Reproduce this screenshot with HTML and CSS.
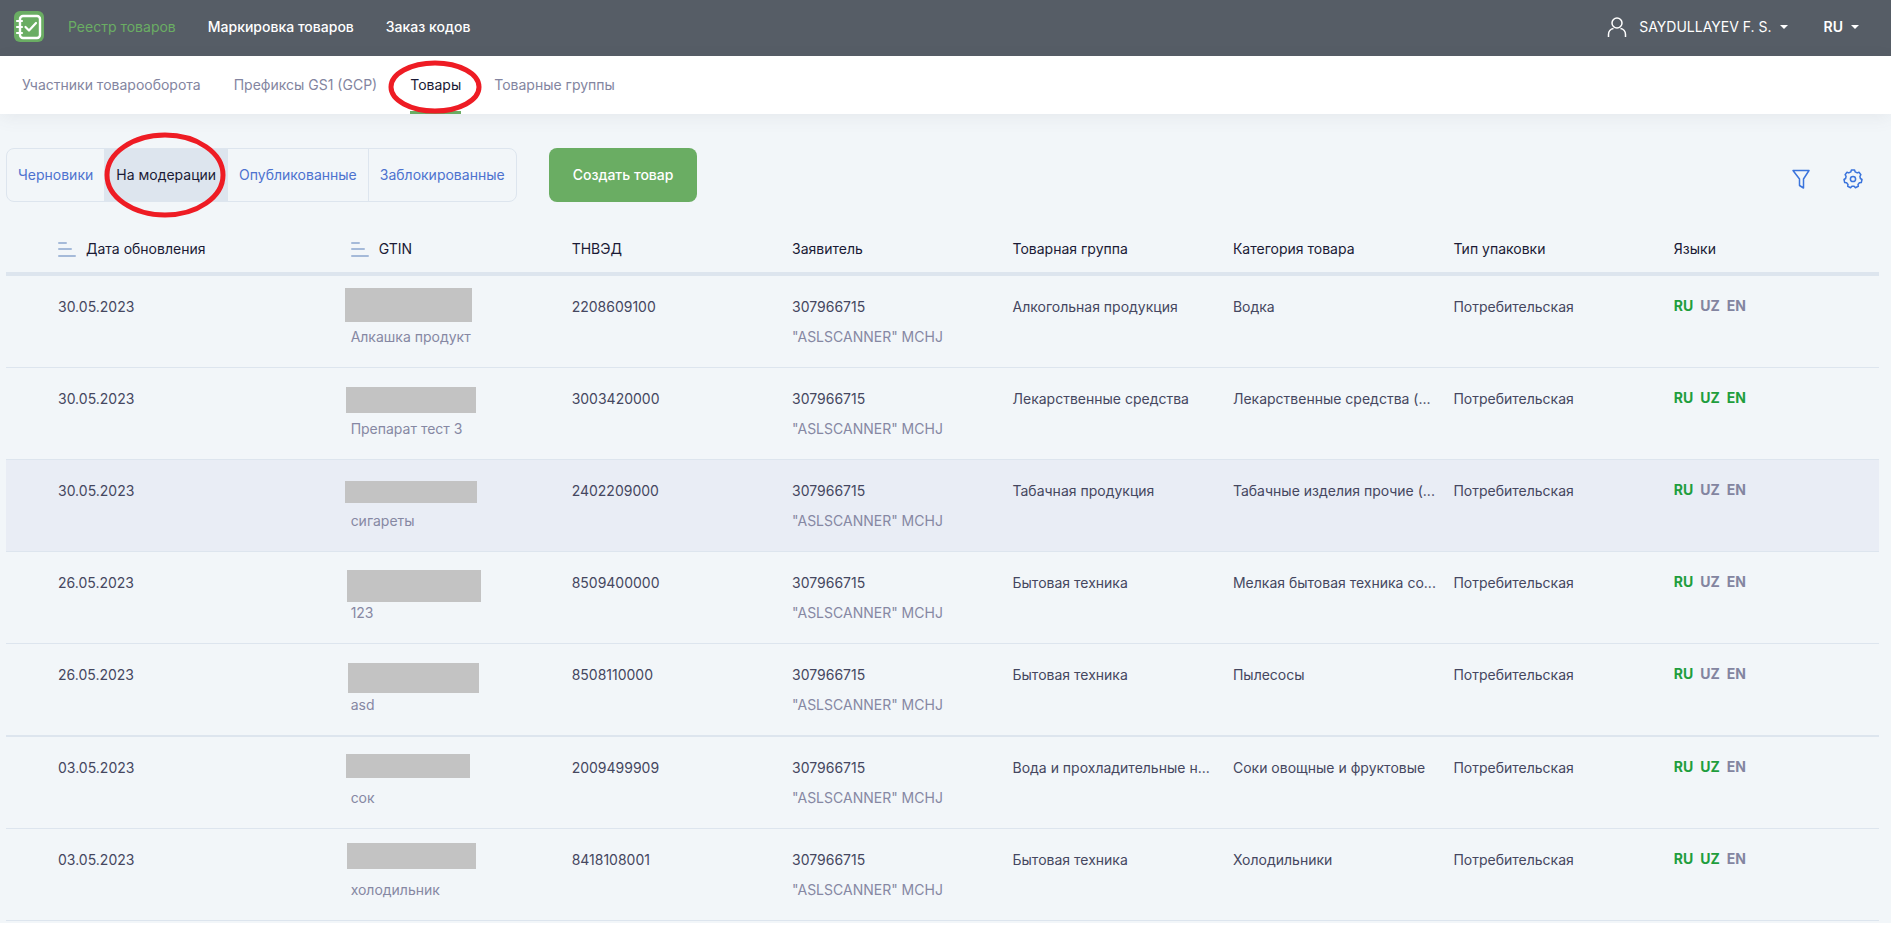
FILE: index.html
```
<!DOCTYPE html>
<html lang="ru">
<head>
    <meta charset="UTF-8">
    <meta name="viewport" content="width=device-width, initial-scale=1.0">
    <title>Реестр товаров</title>
    <link rel="stylesheet" href="styles.css">
</head>
<body>
    <div class="page">
        <header class="header">
            <a href="#" class="logo" aria-label="Главная">
                <svg width="30" height="32" viewBox="0 0 30 32">
                    <rect width="30" height="31" rx="6" fill="#6aad63"/>
                    <rect x="6" y="5" width="20" height="22" rx="3" fill="none" stroke="#fff" stroke-width="2.4"/>
                    <path d="M3 10h5M3 16h5M3 22h5" stroke="#fff" stroke-width="2.2" stroke-linecap="round"/>
                    <path d="M11.500 16l3.500 3.500 7-7.500" fill="none" stroke="#fff" stroke-width="2.2" stroke-linecap="round" stroke-linejoin="round"/>
                </svg>
            </a>
            <nav class="menu">
                <a href="#" class="menu-link current">Реестр товаров</a>
                <a href="#" class="menu-link">Маркировка товаров</a>
                <a href="#" class="menu-link">Заказ кодов</a>
            </nav>
            <div class="account">
                <button type="button" class="user-btn">
                    <svg width="20" height="20" viewBox="0 0 20 20" fill="none" stroke="#fff" stroke-width="1.500">
                        <circle cx="10" cy="6" r="5"/>
                        <path d="M1.500 20v-2.500a6 6 0 0 1 5-6M18.500 20v-2.500a6 6 0 0 0-5-6"/>
                    </svg>
                    <span>SAYDULLAYEV F. S.</span>
                    <span class="caret"></span>
                </button>
                <button type="button" class="lang-btn">RU <span class="caret"></span></button>
            </div>
        </header>

        <nav class="submenu">
            <a href="#" class="submenu-link">Участники товарооборота</a>
            <a href="#" class="submenu-link">Префиксы GS1 (GCP)</a>
            <a href="#" class="submenu-link active">Товары
                <svg class="mark mark-menu" viewBox="0 0 94 54"><ellipse cx="47" cy="27" rx="44" ry="24"/></svg>
            </a>
            <a href="#" class="submenu-link">Товарные группы</a>
        </nav>

        <main class="content">
            <div class="toolbar">
                <div class="tabs">
                    <button type="button" class="tab">Черновики</button>
                    <button type="button" class="tab active">На модерации
                        <svg class="mark mark-tab" viewBox="0 0 122 86"><ellipse cx="61" cy="43" rx="58" ry="40"/></svg>
                    </button>
                    <button type="button" class="tab">Опубликованные</button>
                    <button type="button" class="tab">Заблокированные</button>
                </div>
                <button type="button" class="create-btn">Создать товар</button>
                <div class="tools">
                    <button type="button" class="icon-btn" aria-label="Фильтр">
                        <svg width="20" height="20" viewBox="0 0 20 20" fill="none" stroke="#3b74dc" stroke-width="1.500" stroke-linejoin="round">
                            <path d="M2 1.500h16l-5.500 8.500v9l-4-2.500v-6.500z"/>
                        </svg>
                    </button>
                    <button type="button" class="icon-btn" aria-label="Настройки">
                        <svg width="20" height="20" viewBox="0 0 20 20" fill="none" stroke="#3b74dc" stroke-width="1.500" stroke-linejoin="round">
                            <path d="M7.800 2.900L8.400 1.100H11.600L12.200 2.900L14.200 3.900L16 3.200L17.900 5.700L16.900 7.300L17.400 9.500L19 10.500L18.300 13.500L16.400 13.700L15 15.400L15.300 17.300L12.400 18.700L11.100 17.300H8.900L7.600 18.700L4.700 17.300L5 15.400L3.600 13.700L1.700 13.500L1 10.500L2.600 9.500L3.100 7.300L2.100 5.700L4 3.200L5.800 3.900Z"/>
                            <circle cx="10" cy="10" r="2.600"/>
                        </svg>
                    </button>
                </div>
            </div>

            <table class="table">
                <colgroup>
                    <col class="col-date">
                    <col class="col-gtin">
                    <col class="col-data" span="5">
                    <col>
                </colgroup>
                <thead>
                    <tr>
                        <th>
                            <svg class="sort" width="18" height="16" viewBox="0 0 18 16"><path d="M1 1h7M1 7h12M1 14h16"/></svg>Дата обновления
                        </th>
                        <th>
                            <svg class="sort" width="18" height="16" viewBox="0 0 18 16"><path d="M1 1h7M1 7h12M1 14h16"/></svg>GTIN
                        </th>
                        <th>ТНВЭД</th>
                        <th>Заявитель</th>
                        <th>Товарная группа</th>
                        <th>Категория товара</th>
                        <th>Тип упаковки</th>
                        <th>Языки</th>
                    </tr>
                </thead>
                <tbody>
                    <tr>
                        <td>30.05.2023</td>
                        <td><span class="mask mask-1"></span><div class="sub alone">Алкашка продукт</div></td>
                        <td>2208609100</td>
                        <td>307966715<div class="sub">"ASLSCANNER" MCHJ</div></td>
                        <td>Алкогольная продукция</td>
                        <td>Водка</td>
                        <td>Потребительская</td>
                        <td class="langs"><span class="on">RU</span><span>UZ</span><span>EN</span></td>
                    </tr>
                    <tr>
                        <td>30.05.2023</td>
                        <td><span class="mask mask-2"></span><div class="sub alone">Препарат тест 3</div></td>
                        <td>3003420000</td>
                        <td>307966715<div class="sub">"ASLSCANNER" MCHJ</div></td>
                        <td>Лекарственные средства</td>
                        <td>Лекарственные средства (...</td>
                        <td>Потребительская</td>
                        <td class="langs"><span class="on">RU</span><span class="on">UZ</span><span class="on">EN</span></td>
                    </tr>
                    <tr class="selected">
                        <td>30.05.2023</td>
                        <td><span class="mask mask-3"></span><div class="sub alone">сигареты</div></td>
                        <td>2402209000</td>
                        <td>307966715<div class="sub">"ASLSCANNER" MCHJ</div></td>
                        <td>Табачная продукция</td>
                        <td>Табачные изделия прочие (...</td>
                        <td>Потребительская</td>
                        <td class="langs"><span class="on">RU</span><span>UZ</span><span>EN</span></td>
                    </tr>
                    <tr>
                        <td>26.05.2023</td>
                        <td><span class="mask mask-4"></span><div class="sub alone">123</div></td>
                        <td>8509400000</td>
                        <td>307966715<div class="sub">"ASLSCANNER" MCHJ</div></td>
                        <td>Бытовая техника</td>
                        <td>Мелкая бытовая техника со...</td>
                        <td>Потребительская</td>
                        <td class="langs"><span class="on">RU</span><span>UZ</span><span>EN</span></td>
                    </tr>
                    <tr class="group-end">
                        <td>26.05.2023</td>
                        <td><span class="mask mask-5"></span><div class="sub alone">asd</div></td>
                        <td>8508110000</td>
                        <td>307966715<div class="sub">"ASLSCANNER" MCHJ</div></td>
                        <td>Бытовая техника</td>
                        <td>Пылесосы</td>
                        <td>Потребительская</td>
                        <td class="langs"><span class="on">RU</span><span>UZ</span><span>EN</span></td>
                    </tr>
                    <tr>
                        <td>03.05.2023</td>
                        <td><span class="mask mask-6"></span><div class="sub alone">сок</div></td>
                        <td>2009499909</td>
                        <td>307966715<div class="sub">"ASLSCANNER" MCHJ</div></td>
                        <td>Вода и прохладительные н...</td>
                        <td>Соки овощные и фруктовые</td>
                        <td>Потребительская</td>
                        <td class="langs"><span class="on">RU</span><span class="on">UZ</span><span>EN</span></td>
                    </tr>
                    <tr>
                        <td>03.05.2023</td>
                        <td><span class="mask mask-7"></span><div class="sub alone">холодильник</div></td>
                        <td>8418108001</td>
                        <td>307966715<div class="sub">"ASLSCANNER" MCHJ</div></td>
                        <td>Бытовая техника</td>
                        <td>Холодильники</td>
                        <td>Потребительская</td>
                        <td class="langs"><span class="on">RU</span><span class="on">UZ</span><span>EN</span></td>
                    </tr>
                </tbody>
            </table>
        </main>
    </div>
</body>
</html>
```
FILE: styles.css
```
* {
    box-sizing: border-box;
}

body {
    margin: 0;
    background: #fff;
    font-family: Inter, "Liberation Sans", sans-serif;
    font-size: 14px;
    line-height: 20px;
    color: #45475f;
}

a {
    text-decoration: none;
}

button {
    font: inherit;
    border: 0;
    background: none;
    padding: 0;
    cursor: pointer;
}

.page {
    margin-right: 4px;
    background: #f2f6f9;
    overflow: hidden;
}

/* header */
.header {
    display: flex;
    align-items: center;
    height: 56px;
    padding: 0 32px 2px 14px;
    background: #565d66;
}

.logo {
    display: flex;
    margin-right: 24px;
}

.menu {
    display: flex;
    gap: 32px;
}

.menu-link {
    color: #fff;
    font-weight: 500;
}

.menu-link.current {
    color: #6aad63;
    font-weight: 400;
}

.account {
    display: flex;
    gap: 36px;
    margin-left: auto;
}

.user-btn,
.lang-btn {
    display: flex;
    align-items: center;
    color: #fff;
}

.user-btn svg {
    margin-right: 12px;
}

.lang-btn {
    font-weight: 600;
}

.caret {
    margin-left: 8px;
    border: 4px solid transparent;
    border-top-color: #fff;
    border-bottom: 0;
}

/* submenu */
.submenu {
    display: flex;
    gap: 33px;
    height: 58px;
    padding-left: 22px;
    background: #fff;
    box-shadow: 0 4px 16px rgba(86, 93, 102, 0.08);
}

.submenu-link {
    position: relative;
    padding-top: 19px;
    color: #8385a0;
}

.submenu-link.active {
    color: #1a1a35;
    border-bottom: 3px solid #6aad63;
}

/* red ellipses over the current items */
.mark {
    position: absolute;
    z-index: 1;
    fill: none;
    stroke: #ee1c24;
    stroke-width: 5px;
    pointer-events: none;
}

.mark-menu {
    width: 94px;
    height: 54px;
    left: -22px;
    top: 4px;
}

.mark-tab {
    width: 122px;
    height: 86px;
    left: -1px;
    top: -17px;
}

/* toolbar */
.content {
    padding: 34px 12px 2px 6px;
}

.toolbar {
    display: flex;
    align-items: center;
    height: 54px;
}

.tabs {
    display: flex;
    height: 54px;
    border: 1px solid #dde5ee;
    border-radius: 8px;
}

.tab {
    position: relative;
    padding: 0 11px;
    color: #4d72cf;
    border-left: 1px solid #dde5ee;
}

.tab:first-child {
    border-left: 0;
}

.tab.active {
    background: #dde5ee;
    color: #1a1a35;
}

.create-btn {
    height: 54px;
    margin-left: 32px;
    padding: 0 24px;
    border-radius: 8px;
    background: #6aad63;
    color: #fff;
    font-weight: 500;
}

.tools {
    display: flex;
    gap: 32px;
    margin-left: auto;
    padding: 8px 16px 0 0;
}

.icon-btn {
    display: flex;
}

/* table */
.table {
    width: 100%;
    table-layout: fixed;
    border-collapse: separate;
    border-spacing: 0;
}

.col-date {
    width: 18.4%;
}

.col-gtin {
    width: 11.8%;
}

.col-data {
    width: 11.77%;
}

.table th {
    height: 74px;
    padding: 24px 0 0;
    border-bottom: 4px solid #dde5ee;
    color: #1a1a35;
    font-weight: 400;
    text-align: left;
    white-space: nowrap;
}

.table td {
    position: relative;
    height: 92px;
    padding: 21px 0 0;
    border-bottom: 1px solid #dde5ee;
    vertical-align: top;
    white-space: nowrap;
}

.table th:first-child,
.table td:first-child {
    padding-left: 52px;
}

.table .group-end td {
    height: 93px;
    border-bottom-width: 2px;
}

.selected td {
    background: #e9edf5;
}

.sort {
    margin-right: 10px;
    vertical-align: middle;
    fill: none;
    stroke: #a5bad9;
    stroke-width: 2px;
    stroke-linecap: round;
}

.sub {
    margin-top: 10px;
    color: #8688a3;
}

.sub.alone {
    margin-top: 30px;
}

.table .langs {
    padding-top: 20px;
    color: #8385a0;
    font-weight: 700;
}

.langs span {
    margin-right: 7px;
}

.langs .on {
    color: #1f9e3d;
}

/* hidden GTIN codes */
.mask {
    position: absolute;
    background: #c3c3c3;
}

.mask-1 {
    left: -6px;
    top: 12px;
    width: 127px;
    height: 34px;
}

.mask-2 {
    left: -5px;
    top: 19px;
    width: 130px;
    height: 26px;
}

.mask-3 {
    left: -6px;
    top: 21px;
    width: 132px;
    height: 22px;
}

.mask-4 {
    left: -4px;
    top: 18px;
    width: 134px;
    height: 32px;
}

.mask-5 {
    left: -3px;
    top: 19px;
    width: 131px;
    height: 30px;
}

.mask-6 {
    left: -5px;
    top: 17px;
    width: 124px;
    height: 24px;
}

.mask-7 {
    left: -4px;
    top: 14px;
    width: 129px;
    height: 26px;
}
```
